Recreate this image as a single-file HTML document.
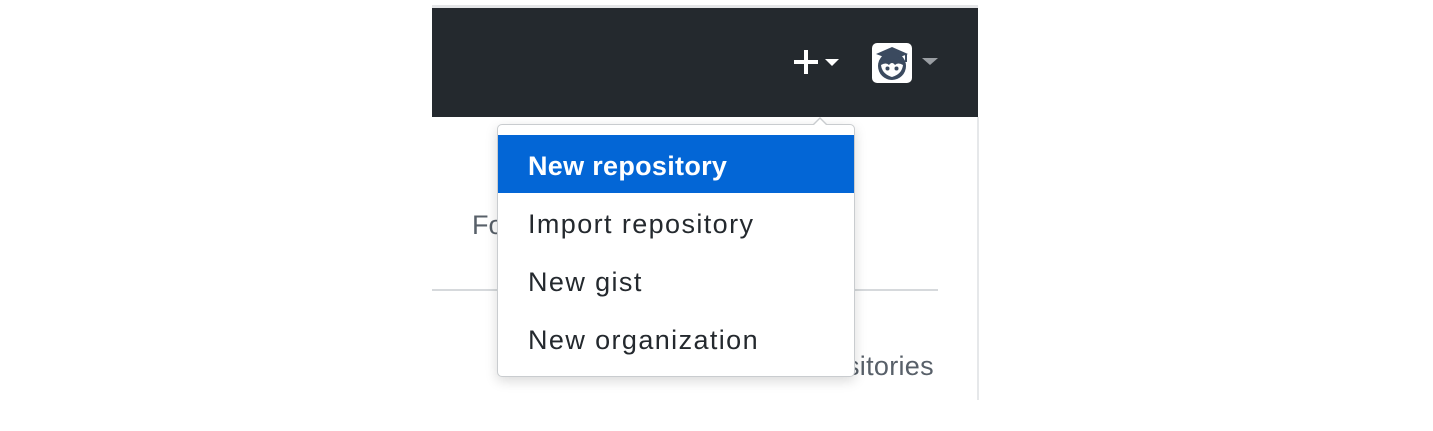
<!DOCTYPE html>
<html><head><style>
body{margin:0;width:1433px;height:431px;background:#fff;position:relative;overflow:hidden;font-family:"Liberation Sans",Arial,sans-serif}
.a{position:absolute}
.item{position:absolute;left:498px;width:356px;height:58px;line-height:62px;padding-left:30px;box-sizing:border-box;font-size:27px;letter-spacing:1.4px;color:#24292e;white-space:nowrap}
</style></head><body>
<div class="a" style="left:432px;top:5px;width:546px;height:3px;background:#e4e5e7"></div>
<div class="a" style="left:432px;top:8px;width:546px;height:109px;background:#24292e"></div>
<div class="a" style="left:977px;top:117px;width:2px;height:283px;background:#e6e8ea"></div>
<div class="a" style="left:794px;top:60px;width:24px;height:4px;background:#fff"></div>
<div class="a" style="left:804px;top:50px;width:4px;height:24px;background:#fff"></div>
<div class="a" style="left:825px;top:59px;width:0;height:0;border-left:7px solid transparent;border-right:7px solid transparent;border-top:7px solid #fff"></div>
<svg class="a" style="left:872px;top:43px" width="40" height="40" viewBox="0 0 40 40">
<rect width="40" height="40" rx="5" fill="#fff"/>
<circle cx="20" cy="23" r="14" fill="#3b4a5f"/>
<path d="M9 22 Q10 31 20 34 Q30 31 31 22 Q26 19 23 22 Q20 18 17 22 Q14 19 9 22Z" fill="#fff"/>
<polygon points="4,11 20,4 36,11 20,17" fill="#3b4a5f"/>
<rect x="33" y="11" width="2" height="8" fill="#3b4a5f"/>
<circle cx="15.5" cy="25.5" r="2" fill="#3b4a5f"/><circle cx="24.5" cy="25.5" r="2" fill="#3b4a5f"/>
</svg>
<div class="a" style="left:922px;top:58px;width:0;height:0;border-left:8px solid transparent;border-right:8px solid transparent;border-top:7px solid #9a9ea3"></div>
<div class="a" style="left:472px;top:210px;font-size:27px;color:#586069">Fo</div>
<div class="a" style="left:432px;top:289px;width:506px;height:2px;background:#d6d9dc"></div>
<div class="a" style="left:846px;top:351px;font-size:27px;letter-spacing:0.3px;color:#586069">sitories</div>
<div class="a" style="left:497px;top:124px;width:358px;height:253px;background:#fff;border:1px solid #c9cccf;border-radius:5px;box-sizing:border-box;box-shadow:0 4px 12px rgba(0,0,0,.15)"></div>
<div class="a" style="left:812px;top:117px;width:0;height:0;border-left:8px solid transparent;border-right:8px solid transparent;border-bottom:8px solid #c9cccf"></div>
<div class="a" style="left:813px;top:118.5px;width:0;height:0;border-left:7px solid transparent;border-right:7px solid transparent;border-bottom:7px solid #fff"></div>
<div class="item" style="top:135px;background:#0366d6;color:#fff;font-weight:bold;letter-spacing:0.3px">New repository</div>
<div class="item" style="top:193px">Import repository</div>
<div class="item" style="top:251px">New gist</div>
<div class="item" style="top:309px">New organization</div>
</body></html>
